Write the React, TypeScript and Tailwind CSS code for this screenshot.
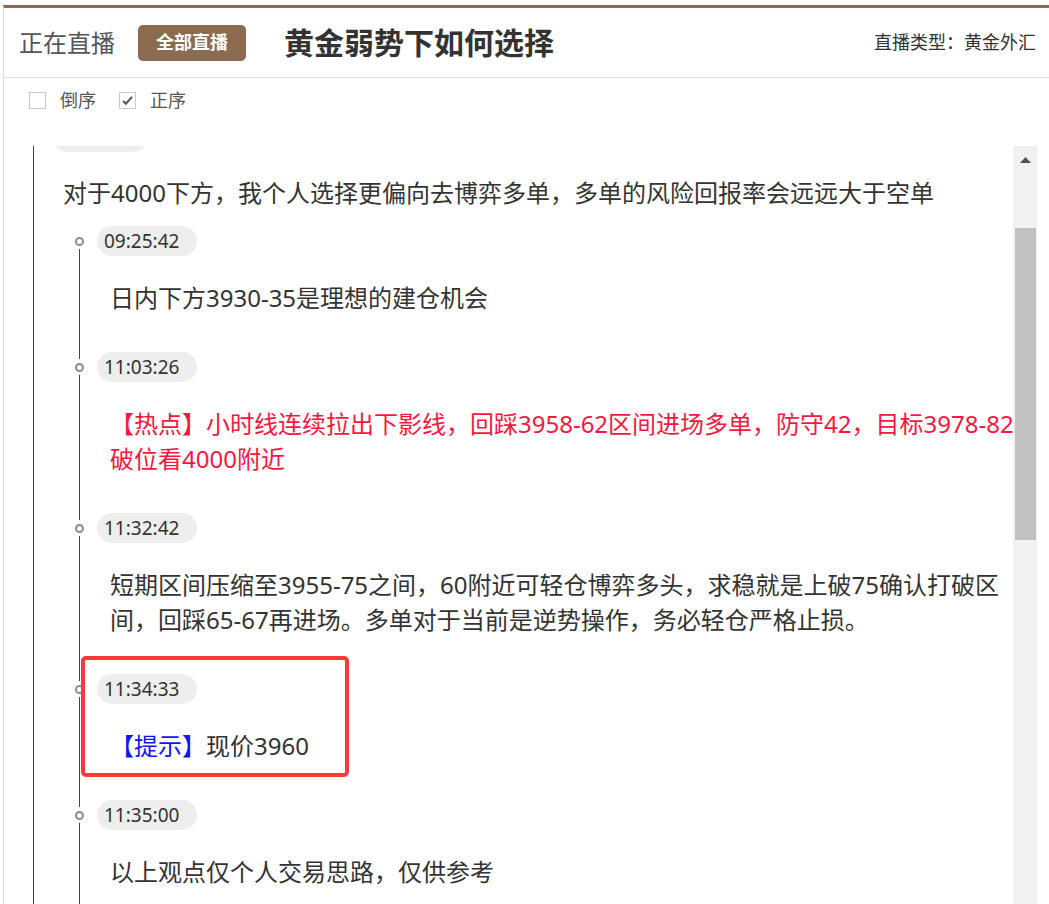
import type { ReactNode } from "react"

type Entry = {
  time: string
  lines: ReactNode[]
  marked?: boolean
}

const entries: Entry[] = [
  { time: "09:25:42", lines: ["日内下方3930-35是理想的建仓机会"] },
  {
    time: "11:03:26",
    lines: [
      <span className="text-[#f8173e]">
        【热点】小时线连续拉出下影线，回踩3958-62区间进场多单，防守42，目标3978-82
      </span>,
      <span className="text-[#f8173e]">破位看4000附近</span>,
    ],
  },
  {
    time: "11:32:42",
    lines: [
      "短期区间压缩至3955-75之间，60附近可轻仓博弈多头，求稳就是上破75确认打破区",
      "间，回踩65-67再进场。多单对于当前是逆势操作，务必轻仓严格止损。",
    ],
  },
  {
    time: "11:34:33",
    lines: [
      <>
        <span className="text-[#1414f0]">【提示】</span>现价3960
      </>,
    ],
    marked: true,
  },
  { time: "11:35:00", lines: ["以上观点仅个人交易思路，仅供参考"] },
]

function TimePill({ time }: { time: string }) {
  return (
    <div className="flex h-[30px] w-[100px] items-center rounded-full bg-[#eeeeee] pl-[7px] text-[19px] text-[#333]">
      {time}
    </div>
  )
}

function Checkbox({ checked, label }: { checked?: boolean; label: string }) {
  return (
    <label className="flex items-center gap-[14px]">
      <span className="flex h-[17px] w-[17px] items-center justify-center border border-[#c8c8c8] bg-white">
        {checked && (
          <svg viewBox="0 0 16 16" className="h-[13px] w-[13px]">
            <path d="M2.5 8.5 L6 12 L13.5 3.5" fill="none" stroke="#555" strokeWidth="2.6" />
          </svg>
        )}
      </span>
      <span className="text-[18px] text-[#555]">{label}</span>
    </label>
  )
}

export default function App() {
  return (
    <div className="h-screen overflow-hidden bg-white pt-[5px] pl-[3px] font-['Microsoft_YaHei','Noto_Sans','Noto_Sans_CJK_SC',sans-serif]">
      <div className="flex h-full flex-col border-t-[3px] border-l border-t-[#8b6c4e] border-l-[#dddddd]">
        {/* Header */}
        <div className="flex h-[70px] shrink-0 items-center border-b border-[#dddddd] pl-[15px] pr-[13px]">
          <span className="text-[24px] text-[#555]">正在直播</span>
          <span className="ml-[23px] flex h-9 w-[108px] items-center justify-center rounded-[5px] bg-[#8b6c4e] text-[18px] font-bold text-white">
            全部直播
          </span>
          <h1 className="ml-[38px] text-[30px] font-bold text-[#333]">黄金弱势下如何选择</h1>
          <span className="ml-auto text-[18px] text-[#333]">直播类型：黄金外汇</span>
        </div>

        {/* Order toggles */}
        <div className="flex h-[68px] shrink-0 items-start gap-[23px] pt-[9px] pl-[25px]">
          <Checkbox label="倒序" />
          <Checkbox checked label="正序" />
        </div>

        {/* Live feed */}
        <div className="flex min-h-0 flex-1 pr-[12px]">
          <div className="relative min-w-0 flex-1 overflow-hidden">
            <div className="absolute top-0 bottom-0 left-[29px] w-px bg-[#444]" />
            <div className="-mt-[24px] pl-[49px]">
              <div className="h-[30px] w-[95px] rounded-full bg-[#eeeeee]" />
              <div className="mt-[23px] ml-[10px] whitespace-nowrap text-[24px] leading-[35px] text-[#333]">
                对于4000下方，我个人选择更偏向去博弈多单，多单的风险回报率会远远大于空单
              </div>

              <div className="relative mt-[16px] ml-[19px]">
                <div className="absolute top-[15px] bottom-0 left-[7px] w-px bg-[#444]" />
                {entries.map((entry) => (
                  <div key={entry.time} className="relative pb-[37px] pl-[25px]">
                    <div className="absolute top-[7px] left-[-1px] flex h-4 w-4 items-center justify-center rounded-full bg-white">
                      <div className="h-[9px] w-[9px] rounded-full border-[2.5px] border-[#8c8c8c] bg-white" />
                    </div>
                    <TimePill time={entry.time} />
                    <div className="mt-[24px] ml-[13px] text-[24px] leading-[35px] text-[#333]">
                      {entry.lines.map((line, i) => (
                        <div key={i} className="whitespace-nowrap">
                          {line}
                        </div>
                      ))}
                    </div>
                    {entry.marked && (
                      <div className="absolute top-[-18px] left-[9px] h-[121px] w-[268px] rounded-[5px] border-4 border-[#f63b3b]" />
                    )}
                  </div>
                ))}
              </div>
            </div>
          </div>

          {/* Scrollbar */}
          <div className="flex w-[24px] shrink-0 flex-col bg-[#f1f1f1]">
            <div className="flex h-[82px] justify-center pt-[11px]">
              <svg viewBox="0 0 11 6" className="h-[6px] w-[11px]">
                <path d="M0 6 L5.5 0 L11 6 Z" fill="#505050" />
              </svg>
            </div>
            <div className="ml-[2px] mr-px h-[312px] bg-[#c1c1c1]" />
          </div>
        </div>
      </div>
    </div>
  )
}
